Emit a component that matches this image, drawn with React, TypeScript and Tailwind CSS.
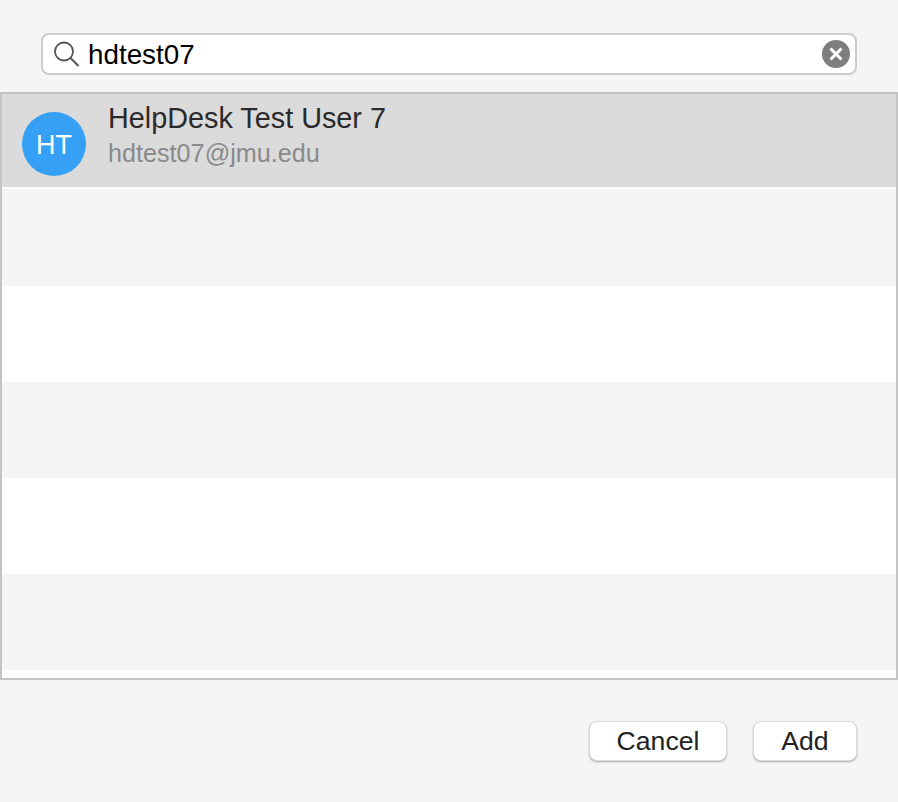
export default function App() {
  const rows = [
    { h: "h-[97px]", bg: "bg-[#f4f4f4]" },
    { h: "h-[96px]", bg: "bg-white" },
    { h: "h-[96px]", bg: "bg-[#f4f4f4]" },
    { h: "h-[96px]", bg: "bg-white" },
    { h: "h-[96px]", bg: "bg-[#f4f4f4]" },
    { h: "h-[8px]", bg: "bg-white" },
  ];
  return (
    <div className="w-[898px] h-[802px] bg-[#f5f5f5] flex flex-col font-['Liberation_Sans',Arial,sans-serif] overflow-hidden">
      <div className="pt-[33px] pl-[41px] pr-[41px] pb-[17px]">
        <div className="h-[42px] bg-white border-2 border-[#cccccc] rounded-[8px] flex items-center pl-[10px] pr-[5px]">
          <svg width="28" height="28" viewBox="0 0 28 28" fill="none" stroke="#555" className="shrink-0">
            <circle cx="11" cy="11.5" r="9" strokeWidth="1.8" />
            <path d="M17.5 18l8 8" strokeWidth="2.2" />
          </svg>
          <span className="ml-[7px] text-[27.8px] leading-[32px] text-black flex-1 pt-[1px]">hdtest07</span>
          <svg width="28" height="28" viewBox="0 0 28 28" className="shrink-0">
            <circle cx="14" cy="14" r="14" fill="#7e7e7e" />
            <path d="M8.5 8.5l11 11M19.5 8.5l-11 11" stroke="#fff" strokeWidth="3" />
          </svg>
        </div>
      </div>
      <div className="h-[588px] border-2 border-[#c4c4c4] bg-white flex flex-col">
        <div className="h-[93px] bg-[#dbdbdb] flex items-center pl-[20px] shrink-0">
          <div className="w-[64px] h-[64px] rounded-full bg-[#36a0f6] flex items-center justify-center text-white text-[27px] mt-[6px] pt-[4px]">HT</div>
          <div className="ml-[22px] flex flex-col -mt-[12px]">
            <span className="text-[28.8px] leading-[36px] text-[#2a2a2a]">HelpDesk Test User 7</span>
            <span className="text-[25.2px] leading-[34px] text-[#8a8a8a]">hdtest07@jmu.edu</span>
          </div>
        </div>
        <div className="h-[2px] bg-white shrink-0" />
        {rows.map((r, i) => (
          <div key={i} className={`${r.h} ${r.bg} shrink-0`} />
        ))}
      </div>
      <div className="flex justify-end gap-[26px] pt-[41px] pr-[41px]">
        <button className="w-[138px] h-[40px] bg-white rounded-[8px] border border-[#dadada] shadow-[0_1px_2px_rgba(0,0,0,0.3)] text-[26.6px] leading-none text-[#222]">Cancel</button>
        <button className="w-[104px] h-[40px] bg-white rounded-[8px] border border-[#dadada] shadow-[0_1px_2px_rgba(0,0,0,0.3)] text-[26.6px] leading-none text-[#222]">Add</button>
      </div>
    </div>
  );
}
